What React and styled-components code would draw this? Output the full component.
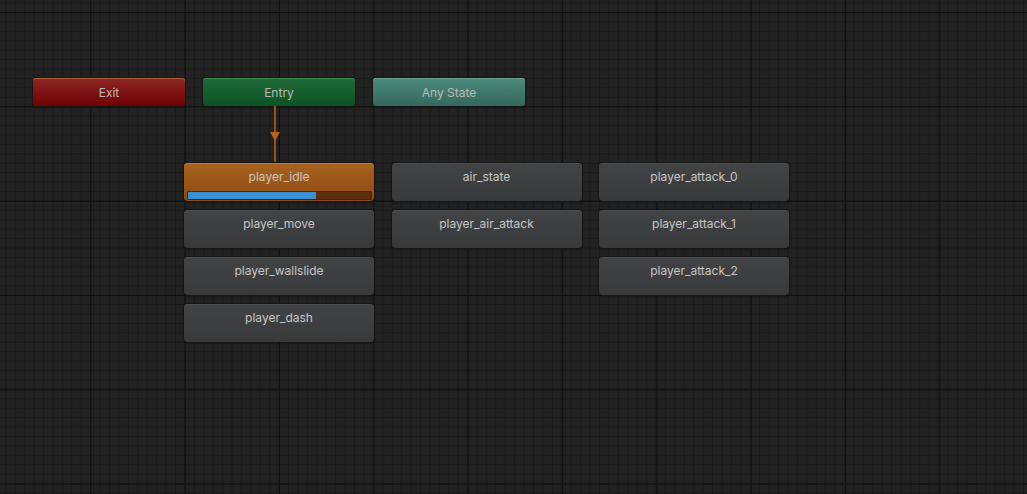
import styled, { createGlobalStyle } from "styled-components";

const GlobalStyle = createGlobalStyle`
  html, body {
    margin: 0;
    padding: 0;
    background: #222222;
  }
  body {
    font-family: Inter, "Noto Sans", "Liberation Sans", sans-serif;
  }
`;

const MAJOR = 94.35;
const MINOR = MAJOR / 10;

const states = [
  [
    { name: "player_idle", active: true, progress: 70 },
    { name: "player_move" },
    { name: "player_wallslide" },
    { name: "player_dash" },
  ],
  [{ name: "air_state" }, { name: "player_air_attack" }],
  [
    { name: "player_attack_0" },
    { name: "player_attack_1" },
    { name: "player_attack_2" },
  ],
];

const App = () => {
  return (
    <>
      <GlobalStyle />
      <Canvas>
        <SpecialRow>
          <SpecialNode $kind="exit">Exit</SpecialNode>
          <SpecialNode $kind="entry">Entry</SpecialNode>
          <SpecialNode $kind="any">Any State</SpecialNode>
        </SpecialRow>

        <Transition>
          <svg width="12" height="57" viewBox="0 0 12 57">
            <rect x="5" y="0" width="2" height="57" fill="#9a5216" />
            <polygon points="1,26 11,26 6,35" fill="#b3631c" />
          </svg>
        </Transition>

        <StateGrid>
          {states.map((col, i) => (
            <StateColumn key={i}>
              {col.map((s) => (
                <StateNode key={s.name} $active={s.active}>
                  <span>{s.name}</span>
                  {s.active && (
                    <Progress>
                      <ProgressFill style={{ width: `${s.progress}%` }} />
                    </Progress>
                  )}
                </StateNode>
              ))}
            </StateColumn>
          ))}
        </StateGrid>
      </Canvas>
    </>
  );
};

const Canvas = styled.div`
  width: 1027px;
  height: 494px;
  box-sizing: border-box;
  overflow: hidden;
  padding: 78px 0 0 33px;
  background-color: #222222;
  background-image:
    linear-gradient(to right, #0f0f0f 1px, transparent 1px),
    linear-gradient(to bottom, #0f0f0f 1px, transparent 1px),
    linear-gradient(to right, #1a1a1a 1px, transparent 1px),
    linear-gradient(to bottom, #1a1a1a 1px, transparent 1px);
  background-size:
    ${MAJOR}px ${MAJOR}px,
    ${MAJOR}px ${MAJOR}px,
    ${MINOR}px ${MINOR}px,
    ${MINOR}px ${MINOR}px;
  background-position:
    -4px 12px,
    -4px 12px,
    -4px 12px,
    -4px 12px;
`;

const SpecialRow = styled.div`
  display: flex;
  gap: 18px;
`;

const kinds = {
  exit: ["#8c2727", "#710101", "#b0603e"],
  entry: ["#21693a", "#0b5422", "#3f8a52"],
  any: ["#4c8b7c", "#35675c", "#6aa596"],
};

const SpecialNode = styled.div`
  width: 152px;
  height: 28px;
  box-sizing: border-box;
  display: flex;
  align-items: center;
  justify-content: center;
  border-radius: 3px;
  font-size: 12px;
  color: #bababa;
  background: linear-gradient(
    to bottom,
    ${(p) => kinds[p.$kind][0]},
    ${(p) => kinds[p.$kind][1]}
  );
  box-shadow:
    inset 0 1px 0 ${(p) => kinds[p.$kind][2]},
    0 0 0 1px #161616,
    0 1px 2px rgba(0, 0, 0, 0.6);
`;

const Transition = styled.div`
  height: 57px;
  margin-left: 236px;
  line-height: 0;
`;

const StateGrid = styled.div`
  display: grid;
  grid-template-columns: repeat(3, 190px);
  column-gap: 17.5px;
  margin-left: 151px;
  align-items: start;
`;

const StateColumn = styled.div`
  display: flex;
  flex-direction: column;
  gap: 9px;
`;

const StateNode = styled.div`
  position: relative;
  height: 38px;
  box-sizing: border-box;
  padding-top: 7px;
  text-align: center;
  font-size: 12px;
  line-height: 14px;
  color: #c6c6c6;
  border-radius: 4px;
  background: ${(p) =>
    p.$active
      ? "linear-gradient(to bottom, #a9631f, #8d4a12)"
      : "linear-gradient(to bottom, #424345, #38393b)"};
  box-shadow:
    inset 0 1px 0 ${(p) => (p.$active ? "#c07a36" : "#4b4c4f")},
    0 0 0 1px #171717,
    0 1px 3px rgba(0, 0, 0, 0.6);
`;

const Progress = styled.div`
  position: absolute;
  left: 3px;
  right: 2px;
  top: 28px;
  height: 9px;
  box-sizing: border-box;
  background: #5b2d0c;
  border: 1px solid #4a240a;
  border-radius: 1px;
  overflow: hidden;
`;

const ProgressFill = styled.div`
  height: 100%;
  background: #3a92d4;
`;

export default App;
